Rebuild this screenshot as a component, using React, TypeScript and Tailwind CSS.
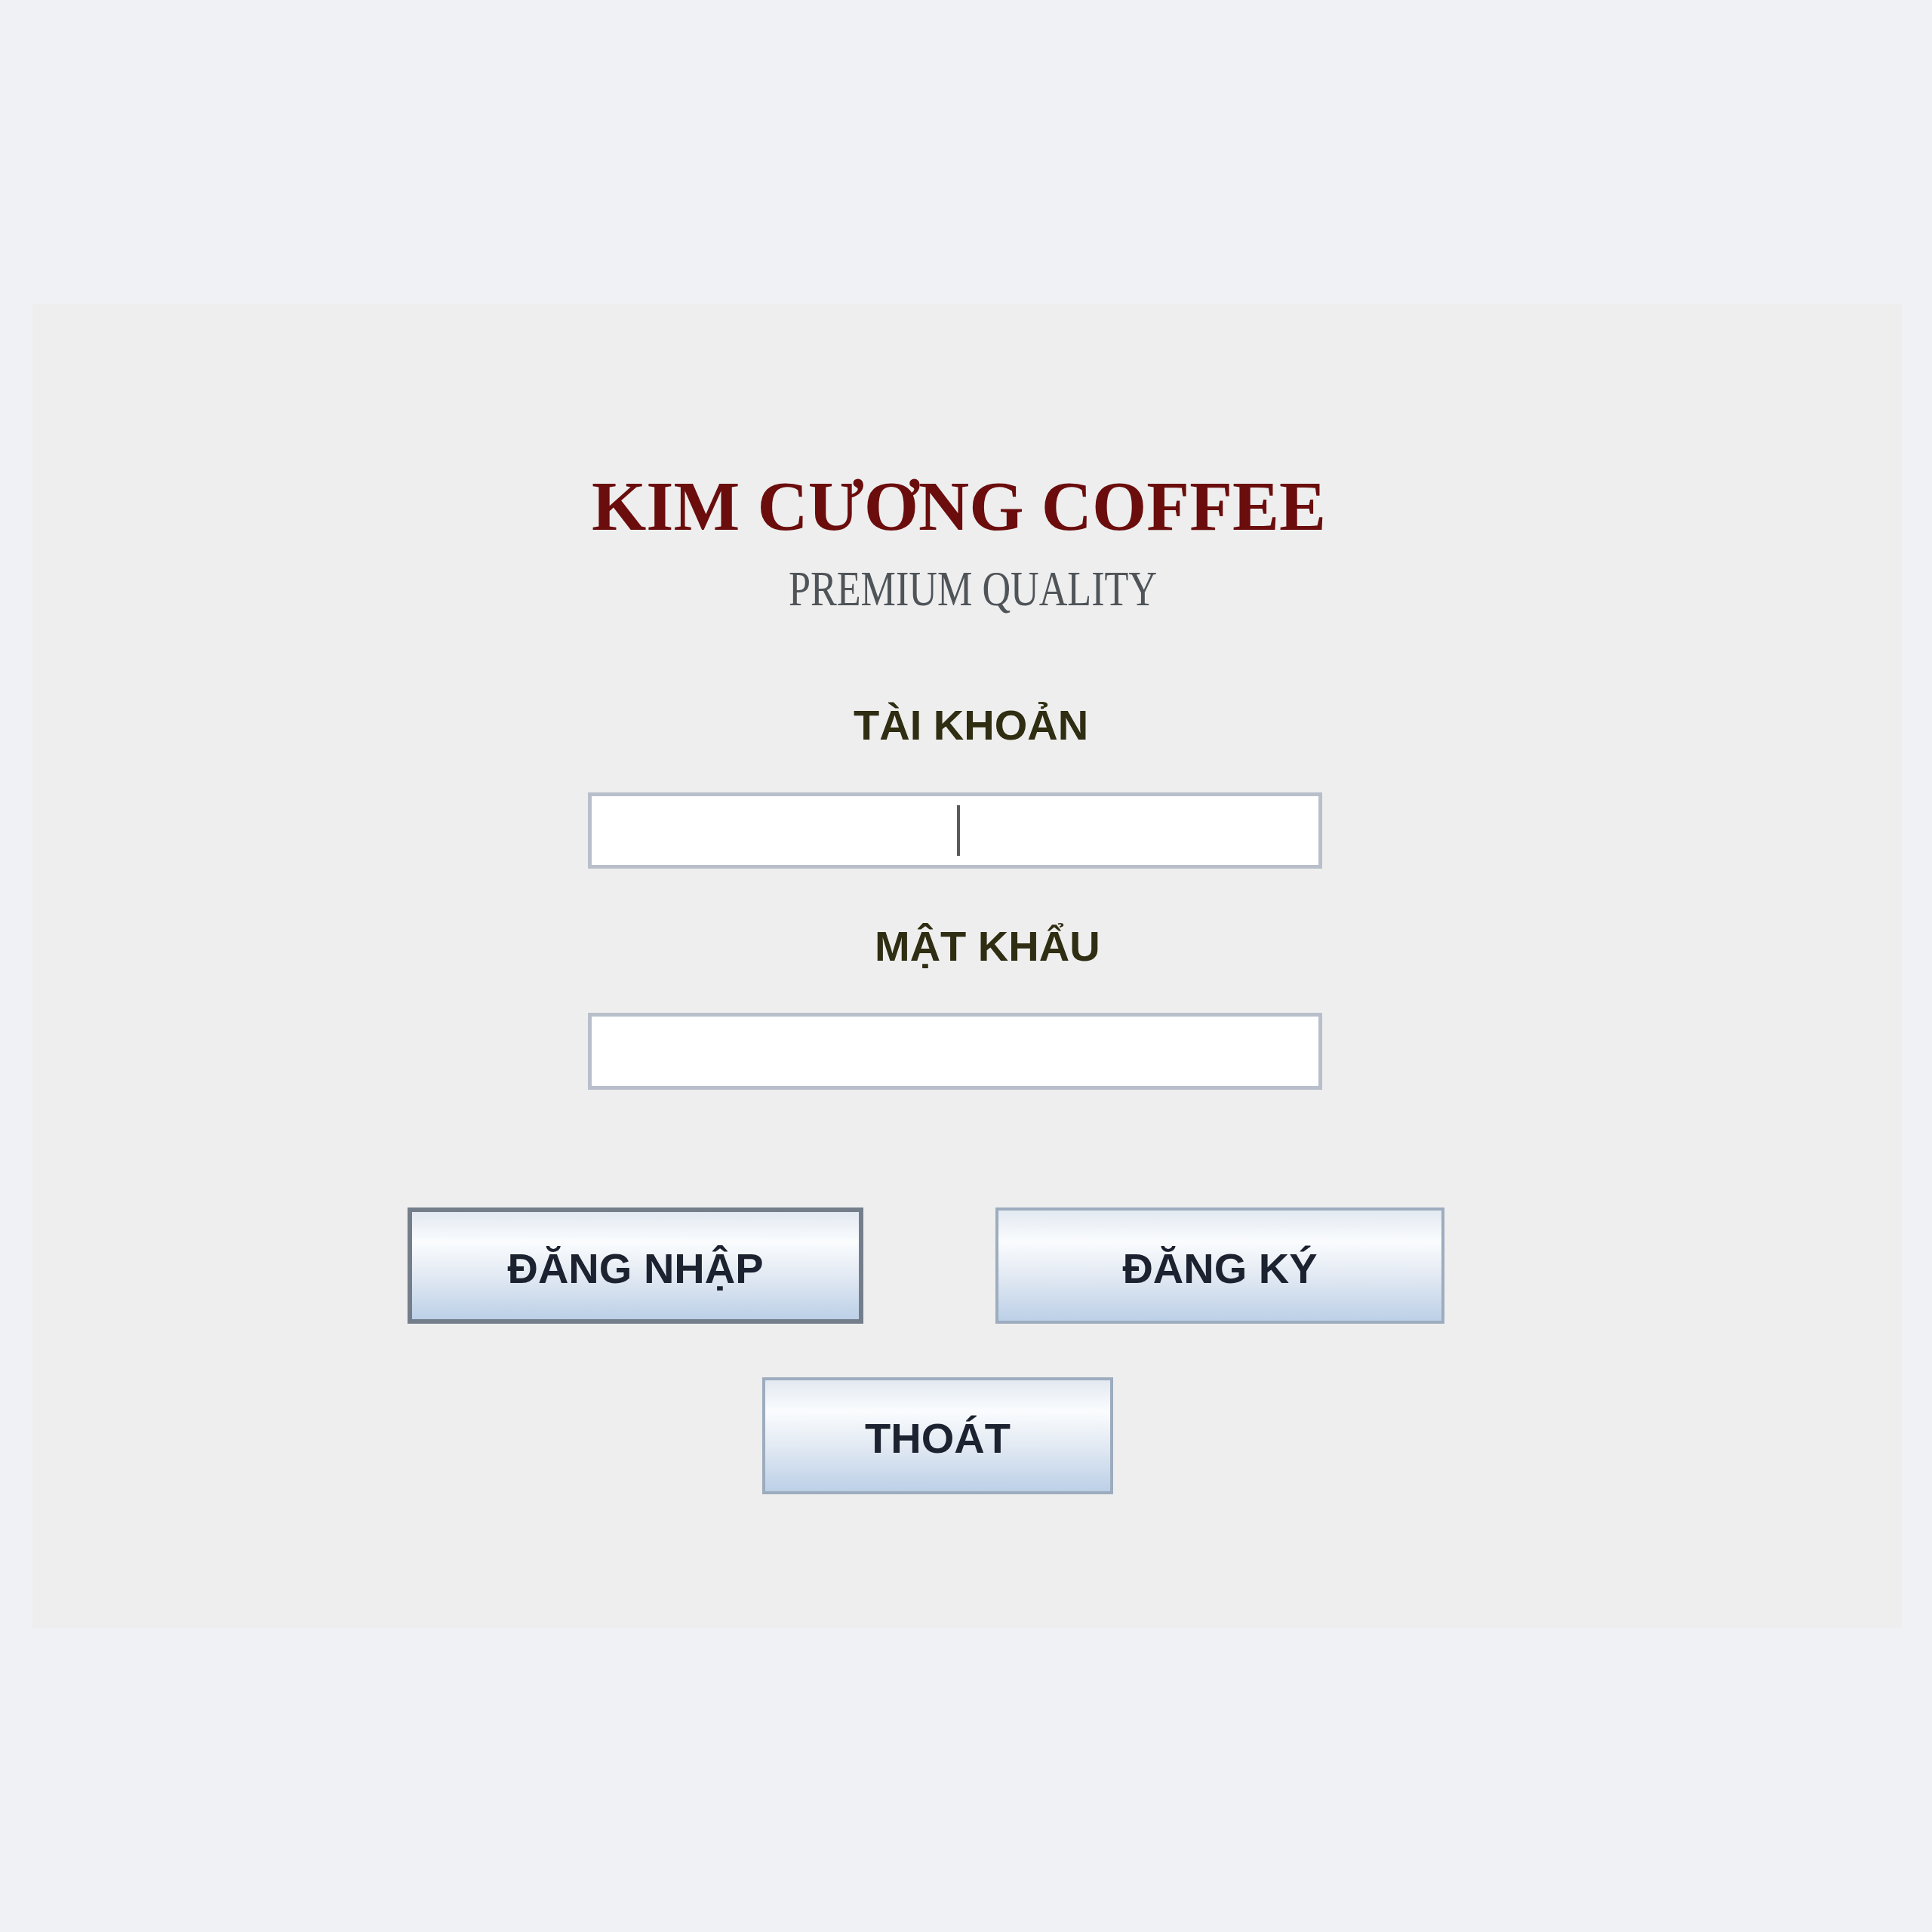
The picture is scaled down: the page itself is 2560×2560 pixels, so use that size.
import React from "react";

const btn =
  "flex items-center justify-center pt-[7px] text-[56px] font-bold leading-none text-[#1c2230] bg-[linear-gradient(to_bottom,#e3e9f1_0%,#fafcfe_28%,#e6ecf4_55%,#bcd0e7_100%)]";

export default function App() {
  return (
    <div className="h-[2560px] w-full bg-[#f0f1f5] pt-[403px] pl-[43px] font-['Liberation_Sans',Arial,sans-serif]">
      <div className="flex h-[1754px] w-[2477px] flex-col items-start bg-[#eeeeee]">
        {/* brand */}
        <h1 className="ml-[741px] mt-[221px] whitespace-nowrap font-['Liberation_Serif',serif] text-[93px] font-bold leading-none text-[#6b0d0d]">
          KIM CƯƠNG COFFEE
        </h1>
        <p className="ml-[1002px] mt-[30px] origin-left scale-x-[0.79] whitespace-nowrap font-['Liberation_Serif',serif] text-[66px] leading-none text-[#4f5459]">
          PREMIUM QUALITY
        </p>

        {/* form */}
        <label className="ml-[1088px] mt-[120px] whitespace-nowrap text-[56px] font-bold leading-none text-[#2f2d12]">
          TÀI KHOẢN
        </label>
        <div className="ml-[736px] mt-[61px] flex h-[101px] w-[973px] items-center border-[5px] border-[#b8bfcb] bg-white">
          <span className="ml-[484px] h-[67px] w-[4px] bg-[#5a5a5a]" />
        </div>

        <label className="ml-[1116px] mt-[75px] whitespace-nowrap text-[56px] font-bold leading-none text-[#2f2d12]">
          MẬT KHẨU
        </label>
        <div className="ml-[736px] mt-[60px] h-[102px] w-[973px] border-[5px] border-[#b8bfcb] bg-white" />

        {/* actions */}
        <div className="ml-[497px] mt-[156px] flex gap-[175px]">
          <button className={`${btn} h-[154px] w-[604px] border-[6px] border-[#747e8b]`}>ĐĂNG NHẬP</button>
          <button className={`${btn} h-[154px] w-[595px] border-4 border-[#9dacbe]`}>ĐĂNG KÝ</button>
        </div>
        <button className={`${btn} ml-[967px] mt-[71px] h-[155px] w-[465px] border-4 border-[#9dacbe]`}>THOÁT</button>
      </div>
    </div>
  );
}
